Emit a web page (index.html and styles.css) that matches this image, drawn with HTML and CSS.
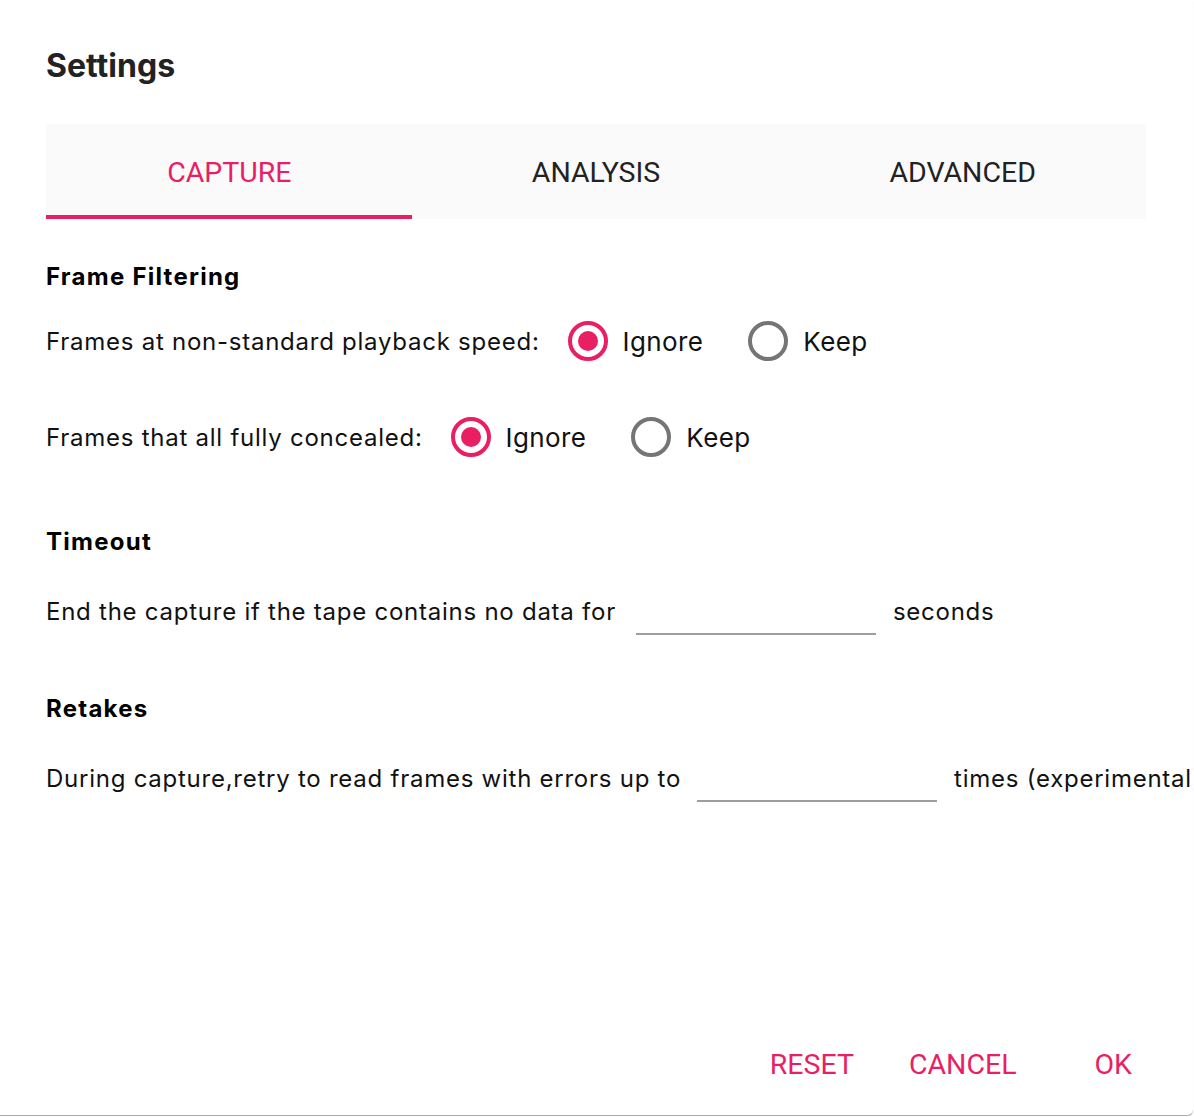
FILE: index.html
```html
<!DOCTYPE html>
<html lang="en">
<head>
  <meta charset="UTF-8" />
  <title>Settings</title>
  <link rel="stylesheet" href="styles.css">
</head>
<body>
  <div class="dialog">
    <h1 class="title">Settings</h1>

    <div class="tabs">
      <div class="tab active">Capture</div>
      <div class="tab">Analysis</div>
      <div class="tab">Advanced</div>
    </div>

    <div class="content">
      <h2 class="section">Frame Filtering</h2>
      <div class="row">
        <span class="label">Frames at non-standard playback speed:</span>
        <label class="radio"><span class="dot checked"></span>Ignore</label>
        <label class="radio"><span class="dot"></span>Keep</label>
      </div>
      <div class="row">
        <span class="label">Frames that all fully concealed:</span>
        <label class="radio"><span class="dot checked"></span>Ignore</label>
        <label class="radio"><span class="dot"></span>Keep</label>
      </div>

      <h2 class="section timeout">Timeout</h2>
      <div class="row field">
        <span class="label">End the capture if the tape contains no data for</span>
        <span class="input"></span>
        <span>seconds</span>
      </div>

      <h2 class="section retakes">Retakes</h2>
      <div class="row field">
        <span class="label tight">During capture,retry to read frames with errors up to</span>
        <span class="input"></span>
        <span>times (experimental)</span>
      </div>
    </div>

    <div class="actions">
      <button>Reset</button>
      <button class="cancel">Cancel</button>
      <button class="ok">OK</button>
    </div>
  </div>
</body>
</html>
```

FILE: styles.css
```css
html, body {
  margin: 0;
  padding: 0;
  background: #fff;
  overflow: hidden;
}

body {
  font-family: Inter, 'Noto Sans', sans-serif;
  color: #111;
}

.dialog {
  width: 1193px;
  height: 1116px;
  border-bottom: 1px solid #ababab;
  border-bottom-right-radius: 6px;
  box-shadow: 0 1px 1px rgba(0, 0, 0, 0.15);
  box-sizing: border-box;
  padding: 0 0 0 46px;
  display: flex;
  flex-direction: column;
  overflow: hidden;
}

.title {
  font-size: 32px;
  font-weight: 700;
  color: #222;
  margin: 47px 0 0;
  line-height: 38px;
}

.tabs {
  display: flex;
  width: 1100px;
  height: 95px;
  margin-top: 39px;
  background: #fafafa;
}

.tab {
  flex: 1;
  display: flex;
  align-items: center;
  justify-content: center;
  font-family: Roboto, sans-serif;
  font-size: 28.5px;
  text-transform: uppercase;
  color: #222;
  padding-top: 2px;
  position: relative;
}

.tab.active {
  color: #e91e63;
}

.tab.active::after {
  content: '';
  position: absolute;
  left: 0;
  right: 1px;
  bottom: 0;
  height: 4px;
  background: #e91e63;
}

.content {
  flex: 1;
}

.section {
  font-size: 24px;
  font-weight: 700;
  letter-spacing: 1.25px;
  margin: 43px 0 0;
  line-height: 30px;
  color: #000;
}

.section.timeout {
  margin-top: 62px;
}

.section.retakes {
  margin-top: 55px;
}

.row {
  display: flex;
  align-items: center;
  height: 56px;
  margin-top: 21px;
  font-size: 24px;
  letter-spacing: 0.75px;
  white-space: nowrap;
}

.row + .row {
  margin-top: 40px;
}

.row.field {
  margin-top: 26px;
}

.label {
  margin-right: 28px;
}

.radio {
  display: flex;
  align-items: center;
  font-size: 26px;
  letter-spacing: 0.4px;
  margin-right: 45px;
}

.dot {
  width: 40px;
  height: 40px;
  box-sizing: border-box;
  border: 4px solid #757575;
  border-radius: 50%;
  margin-right: 15px;
  position: relative;
}

.dot.checked {
  border-color: #e91e63;
}

.dot.checked::after {
  content: '';
  position: absolute;
  left: 6px;
  top: 6px;
  width: 20px;
  height: 20px;
  border-radius: 50%;
  background: #e91e63;
}

.field .label {
  margin-right: 20px;
}

.field .label.tight {
  margin-right: 16px;
}

.input {
  flex-shrink: 0;
  width: 240px;
  height: 50px;
  border-bottom: 2px solid #9e9e9e;
  margin-right: 17px;
  align-self: flex-start;
}

.actions {
  display: flex;
  justify-content: flex-end;
  width: 1100px;
  padding-bottom: 24px;
}

.actions button {
  background: none;
  border: none;
  font-family: Roboto, sans-serif;
  font-size: 28.5px;
  text-transform: uppercase;
  color: #e91e63;
  padding: 10px 0;
  cursor: pointer;
}

.actions .cancel {
  margin-left: 55px;
}

.actions .ok {
  margin-left: 78px;
  margin-right: 14px;
}
```
